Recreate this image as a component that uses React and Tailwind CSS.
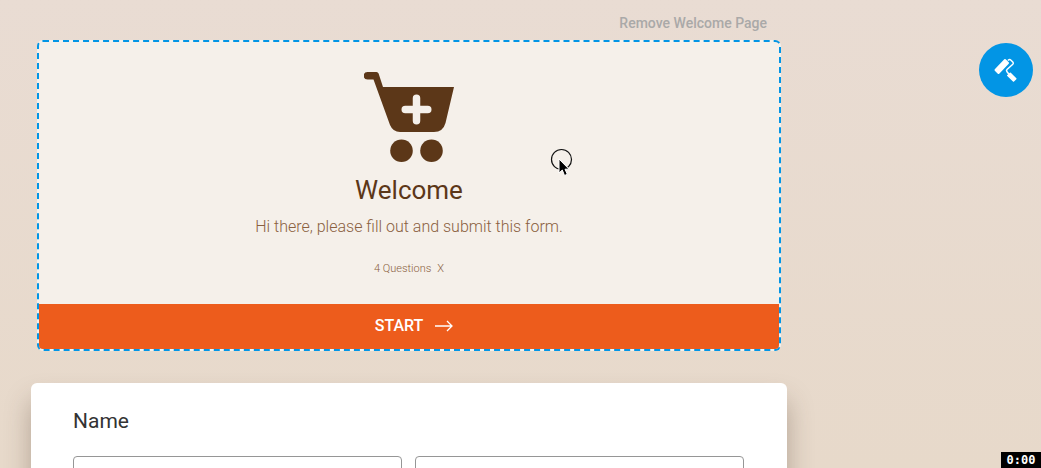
function CartIcon() {
  return (
    <svg width="90" height="90" viewBox="0 0 90 90" fill="currentColor" aria-hidden="true">
      <path
        fillRule="evenodd"
        d="M3.500 0H12.500Q14 0 14.600 1.500L19 15H90L81.500 51Q79 60 70 60H36Q29 60 26 53L9.500 7.500H3.500A3.750 3.750 0 0 1 3.500 0ZM52.500 22.500A3.750 3.750 0 0 0 48.750 26.250V33.750H41.250A3.750 3.750 0 0 0 41.250 41.250H48.750V48.750A3.750 3.750 0 0 0 56.250 48.750V41.250H63.750A3.750 3.750 0 0 0 63.750 33.750H56.250V26.250A3.750 3.750 0 0 0 52.500 22.500Z"
      />
      <circle cx="37.500" cy="78.700" r="11.300" />
      <circle cx="67.500" cy="78.700" r="11.300" />
    </svg>
  );
}

function RollerIcon() {
  return (
    <svg width="24" height="24" viewBox="0 0 24 24" fill="none" stroke="white" strokeLinejoin="round" aria-hidden="true">
      <path d="M1.500 12L11 2L14 5L4.500 15Z" fill="white" strokeWidth="2" />
      <path
        d="M13.800 2.500L15 1.700Q16 1.300 17 2.200L19 4.200Q19.700 5.200 18.800 6.200L13 11.500Q12 12.600 13 13.800L15 16.300"
        strokeWidth="1.500"
      />
      <path d="M13.800 17.500L16.300 15.400L21.800 20.700L19.500 23Z" fill="white" strokeWidth="1.500" />
    </svg>
  );
}

function ArrowIcon() {
  return (
    <svg width="18" height="12" viewBox="0 0 18 12" fill="none" stroke="currentColor" strokeWidth="1.300" aria-hidden="true">
      <path d="M0 6H17M12 1L17 6L12 11" />
    </svg>
  );
}

function Pointer() {
  return (
    <svg className="absolute left-[511px] top-[106px]" width="24" height="30" viewBox="0 0 24 30" aria-hidden="true">
      <circle cx="11.500" cy="11.500" r="10" fill="none" stroke="#111" strokeWidth="1.200" />
      <path
        d="M9 11V25L12.300 22L14.500 27.500L17.300 26.300L15 21.200H19Z"
        fill="black"
        stroke="white"
        strokeWidth="1"
      />
    </svg>
  );
}

function WelcomeCard() {
  return (
    <section className="relative mx-1.5 rounded-md border-2 border-dashed border-[#0295e5] bg-[#f5f0ea] text-center text-[#5c3718]">
      <div className="flex flex-col items-center px-6 pt-[30px] pb-[26px]">
        <CartIcon />
        <h1 className="mt-3 text-[26px] leading-8">Welcome</h1>
        <p className="mt-[9px] text-base leading-6 font-light text-[#8a6040]">
          Hi there, please fill out and submit this form.
        </p>
        <div className="mt-[21px] flex items-center gap-1.5 text-[11px] leading-[18px] font-light text-[#8a6040]">
          <span>4 Questions</span>
          <button className="cursor-pointer" aria-label="Hide question count">X</button>
        </div>
      </div>
      <button className="flex h-[45px] w-full cursor-pointer items-center justify-center gap-3 rounded-b bg-[#ed5c1c] pb-px pl-2.5 text-base font-medium text-white">
        START
        <ArrowIcon />
      </button>
      <Pointer />
    </section>
  );
}

function NameCard() {
  return (
    <form className="mt-8 rounded-md bg-white pr-[43px] pl-[42px] pt-6 pb-10 shadow-[0_18px_26px_rgba(80,60,45,0.35)]">
      <fieldset>
        <legend className="text-[21px] leading-7 text-[#333]">Name</legend>
        <div className="mt-[21px] grid grid-cols-2 gap-[13px]">
          <input aria-label="First name" className="h-12 w-full rounded-sm border border-[#969696] px-3" />
          <input aria-label="Last name" className="h-12 w-full rounded-sm border border-[#969696] px-3" />
        </div>
      </fieldset>
    </form>
  );
}

function App() {
  return (
    <div className="h-screen overflow-hidden bg-linear-to-b from-[#e9dcd3] to-[#e7d9ca] font-['Roboto',sans-serif]">
      <main className="ml-[31px] max-w-[756px]">
        <div className="flex h-10 items-end justify-end pr-5 pb-[7px]">
          <button className="cursor-pointer text-sm font-medium text-[#aaa9a8]">Remove Welcome Page</button>
        </div>
        <WelcomeCard />
        <NameCard />
      </main>

      <button
        aria-label="Open form designer"
        className="fixed top-[43px] right-2 flex size-[54px] cursor-pointer items-center justify-center rounded-full bg-[#0295e5]"
      >
        <RollerIcon />
      </button>
      <time className="fixed right-0 bottom-0 flex h-4 w-10 items-center justify-center bg-black font-['DejaVu_Sans_Mono',monospace] text-xs font-bold text-white">
        0:00
      </time>
    </div>
  );
}

export default App;
